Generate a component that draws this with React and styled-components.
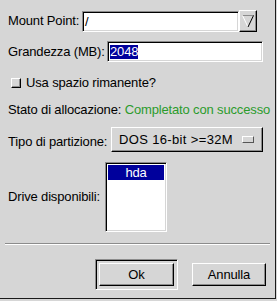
import React from "react";
import styled, { createGlobalStyle, css } from "styled-components";

const GlobalStyle = createGlobalStyle`
  html, body {
    margin: 0;
    padding: 0;
    background: #d6d6d6;
  }
  body {
    font-family: "Liberation Sans", Arial, sans-serif;
    font-size: 13px;
    letter-spacing: -0.15px;
    color: #000;
  }
`;

const sunken = css`
  border: 1px solid;
  border-color: #8c8c8c #ffffff #ffffff #8c8c8c;
  box-shadow: inset 1px 1px 0 #000, inset -1px -1px 0 #d6d6d6;
`;

const raised = css`
  border: 1px solid;
  border-color: #ffffff #000000 #000000 #ffffff;
  box-shadow: inset -1px -1px 0 #8c8c8c;
`;

const Window = styled.div`
  box-sizing: border-box;
  width: 276px;
  height: 299px;
  border-right: 1px solid #1a1a1a;
  border-bottom: 1px solid #1a1a1a;
  background: #d6d6d6;
  display: flex;
  flex-direction: column;
`;

const Form = styled.div`
  display: flex;
  flex-direction: column;
  padding-left: 8px;
`;

const Row = styled.div`
  display: flex;
  align-items: ${(p) => p.$align || "center"};
  margin-top: ${(p) => p.$mt}px;
  height: ${(p) => p.$h}px;
`;

const Label = styled.span`
  flex: none;
  width: ${(p) => (p.$w ? `${p.$w}px` : "auto")};
  white-space: nowrap;
  line-height: 18px;
  margin-top: ${(p) => p.$dy || 0}px;
`;

const Combo = styled.div`
  display: flex;
  align-items: flex-end;
  height: 100%;
`;

const Entry = styled.div`
  box-sizing: border-box;
  width: ${(p) => p.$w}px;
  height: 21px;
  background: #fff;
  ${sunken};
  padding: 0 2px;
  display: flex;
  align-items: center;
  white-space: nowrap;
  line-height: 14px;
`;

const Selection = styled.span`
  background: #00009c;
  color: #fff;
`;

const ArrowButton = styled.div`
  box-sizing: border-box;
  width: 18px;
  height: 22px;
  background: #d6d6d6;
  ${raised};
  display: flex;
  align-items: center;
  justify-content: center;
`;

const CheckRow = styled(Row)`
  padding-left: 3px;
  gap: 5px;
`;

const CheckBox = styled.span`
  box-sizing: border-box;
  width: 10px;
  height: 10px;
  background: #d6d6d6;
  ${raised};
`;

const Status = styled.span`
  color: #2b9b2b;
`;

const OptionMenu = styled.div`
  box-sizing: border-box;
  width: 152px;
  height: 25px;
  background: #d6d6d6;
  ${raised};
  padding: 0 8px 0 7px;
  display: flex;
  align-items: center;
  justify-content: space-between;
  white-space: nowrap;
`;

const OptionText = styled.span`
  letter-spacing: 0.35px;
`;

const Indicator = styled.span`
  box-sizing: border-box;
  width: 12px;
  height: 7px;
  border: 1px solid;
  border-color: #ffffff #555555 #555555 #ffffff;
  background: #d6d6d6;
`;

const ListBox = styled.div`
  box-sizing: border-box;
  width: 62px;
  height: 70px;
  background: #fff;
  ${sunken};
  padding: 2px 2px;
`;

const ListItem = styled.div`
  height: 15px;
  line-height: 15px;
  text-align: center;
  background: ${(p) => (p.$selected ? "#00009c" : "transparent")};
  color: ${(p) => (p.$selected ? "#fff" : "#000")};
`;

const Separator = styled.div`
  margin: 11px 5px 0 5px;
  height: 0;
  border-top: 1px solid #8c8c8c;
  border-bottom: 1px solid #ffffff;
`;

const ActionArea = styled.div`
  display: flex;
  justify-content: flex-end;
  align-items: center;
  gap: 14px;
  margin-top: 13px;
  padding-right: 9px;
  height: 33px;
`;

const DefaultFrame = styled.div`
  ${sunken};
  padding: 3px;
  display: flex;
`;

const Button = styled.div`
  box-sizing: border-box;
  width: ${(p) => p.$w}px;
  height: 23px;
  background: #d6d6d6;
  ${raised};
  display: flex;
  align-items: center;
  justify-content: center;
  line-height: 15px;
`;

function DownArrow() {
  return (
    <svg width="12" height="14" viewBox="0 0 12 14">
      <line x1="0.5" y1="1.5" x2="11.5" y2="1.5" stroke="#8c8c8c" strokeWidth="1" />
      <line x1="0.5" y1="1.5" x2="6" y2="13" stroke="#ffffff" strokeWidth="1" />
      <line x1="11.5" y1="1.5" x2="6" y2="13" stroke="#000000" strokeWidth="1" />
    </svg>
  );
}

export default function App() {
  return (
    <>
      <GlobalStyle />
      <Window>
        <Form>
          <Row $mt={10} $h={22}>
            <Label $w={74}>Mount Point:</Label>
            <Combo>
              <Entry $w={157}>/</Entry>
              <ArrowButton>
                <DownArrow />
              </ArrowButton>
            </Combo>
          </Row>
          <Row $mt={9} $h={21}>
            <Label $w={99}>Grandezza (MB):</Label>
            <Entry $w={156}>
              <Selection>2048</Selection>
            </Entry>
          </Row>
          <CheckRow $mt={12} $h={18}>
            <CheckBox />
            <Label>Usa spazio rimanente?</Label>
          </CheckRow>
          <Row $mt={9} $h={18}>
            <Label>
              Stato di allocazione: <Status>Completato con successo</Status>
            </Label>
          </Row>
          <Row $mt={8} $h={25}>
            <Label $w={103} $dy={4}>Tipo di partizione:</Label>
            <OptionMenu>
              <OptionText>DOS 16-bit &gt;=32M</OptionText>
              <Indicator />
            </OptionMenu>
          </Row>
          <Row $mt={10} $h={70}>
            <Label $w={97}>Drive disponibili:</Label>
            <ListBox>
              <ListItem $selected>hda</ListItem>
            </ListBox>
          </Row>
        </Form>
        <Separator />
        <ActionArea>
          <DefaultFrame>
            <Button $w={75}>Ok</Button>
          </DefaultFrame>
          <Button $w={74}>Annulla</Button>
        </ActionArea>
      </Window>
    </>
  );
}
